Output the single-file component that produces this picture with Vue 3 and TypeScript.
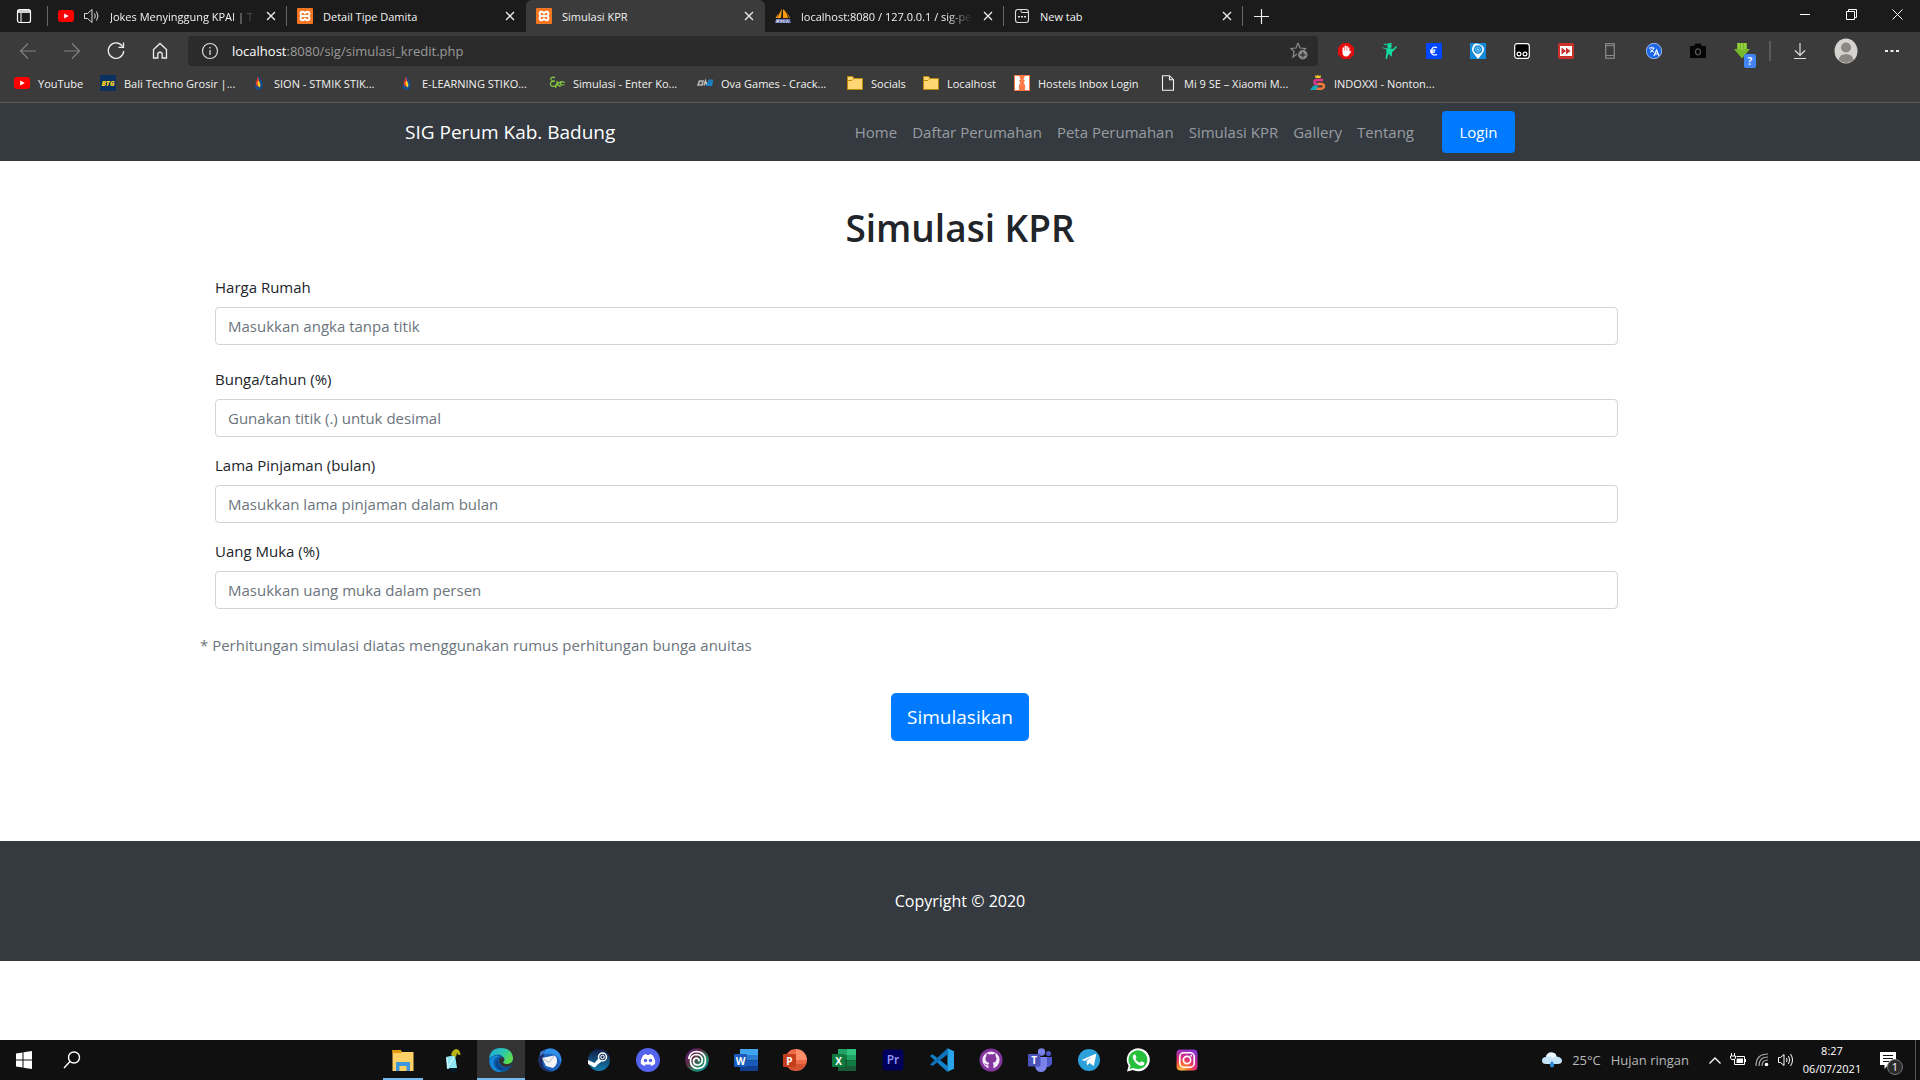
<script setup lang="ts">
import { ref } from 'vue'

interface Tab { title: string; icon: string; audio?: boolean; active?: boolean; fade?: boolean; divider?: boolean }
interface Bookmark { title: string; icon: string; width: number }
interface Field { id: string; label: string; placeholder: string; spaced?: boolean }
interface App { name: string; icon: string; state?: string }

const tabs: Tab[] = [
  { title: 'Jokes Menyinggung KPAI | T', icon: 'youtube', audio: true, fade: true, divider: true },
  { title: 'Detail Tipe Damita', icon: 'xampp' },
  { title: 'Simulasi KPR', icon: 'xampp', active: true },
  { title: 'localhost:8080 / 127.0.0.1 / sig-pe', icon: 'pma', fade: true, divider: true },
  { title: 'New tab', icon: 'newtab', divider: true },
]

const bookmarks: Bookmark[] = [
  { title: 'YouTube', icon: 'youtube', width: 86 },
  { title: 'Bali Techno Grosir |...', icon: 'btg', width: 150 },
  { title: 'SION - STMIK STIK...', icon: 'flame', width: 148 },
  { title: 'E-LEARNING STIKO...', icon: 'flame', width: 151 },
  { title: 'Simulasi - Enter Ko...', icon: 'ek', width: 148 },
  { title: 'Ova Games - Crack...', icon: 'ova', width: 150 },
  { title: 'Socials', icon: 'folder', width: 76 },
  { title: 'Localhost', icon: 'folder', width: 91 },
  { title: 'Hostels Inbox Login', icon: 'hostel', width: 146 },
  { title: 'Mi 9 SE – Xiaomi M...', icon: 'page', width: 150 },
  { title: 'INDOXXI - Nonton...', icon: 'indo', width: 150 },
]

const extensions = ['hand', 'runner', 'euro', 'pin', 'tamper', 'forward', 'phone', 'translate', 'camera', 'downloader']

const links = ['Home', 'Daftar Perumahan', 'Peta Perumahan', 'Simulasi KPR', 'Gallery', 'Tentang']

const fields: Field[] = [
  { id: 'harga', label: 'Harga Rumah', placeholder: 'Masukkan angka tanpa titik', spaced: true },
  { id: 'bunga', label: 'Bunga/tahun (%)', placeholder: 'Gunakan titik (.) untuk desimal' },
  { id: 'lama', label: 'Lama Pinjaman (bulan)', placeholder: 'Masukkan lama pinjaman dalam bulan' },
  { id: 'muka', label: 'Uang Muka (%)', placeholder: 'Masukkan uang muka dalam persen' },
]

const apps: App[] = [
  { name: 'File Explorer', icon: 'explorer', state: 'open' },
  { name: 'Notepad', icon: 'bird' },
  { name: 'Edge', icon: 'edge', state: 'current' },
  { name: 'Thunderbird', icon: 'thunderbird' },
  { name: 'Steam', icon: 'steam' },
  { name: 'Discord', icon: 'discord' },
  { name: 'Ubisoft Connect', icon: 'ubisoft' },
  { name: 'Word', icon: 'word' },
  { name: 'PowerPoint', icon: 'powerpoint' },
  { name: 'Excel', icon: 'excel' },
  { name: 'Premiere', icon: 'premiere' },
  { name: 'VS Code', icon: 'vscode' },
  { name: 'GitHub', icon: 'github' },
  { name: 'Teams', icon: 'teams' },
  { name: 'Telegram', icon: 'telegram' },
  { name: 'WhatsApp', icon: 'whatsapp' },
  { name: 'Instagram', icon: 'instagram' },
]

const values = ref<Record<string, string>>({ harga: '', bunga: '', lama: '', muka: '' })

// 16-unit glyphs for the browser chrome
const small: Record<string, string> = {
  youtube: '<rect y="2" width="16" height="12" rx="3" fill="#f00"/><path d="M6.2 5.4v5.2L10.8 8z" fill="#fff"/>',
  xampp: '<rect width="16" height="16" rx="1" fill="#f37623"/><path d="M8 5.500Q7 3.700 5.300 3.800 3.500 4 3.500 5.800 3.600 7.500 5 8 3.500 8.500 3.500 10.300 3.600 12.200 5.400 12.200 7 12.200 8 10.500 9 12.200 10.600 12.200 12.400 12.200 12.500 10.300 12.500 8.500 11 8 12.400 7.500 12.500 5.800 12.500 4 10.700 3.800 9 3.700 8 5.500zM5 8h6" fill="none" stroke="#fff" stroke-width="1.900" stroke-linejoin="round"/>',
  pma: '<path d="M7 .5 2 10h4zM8 1v9h5Q12 4 8 1zM3.500 5 .5 10H2zM12 4l3 6h-1z" fill="#f89c0e"/><path d="M1 11h14l1 4H0z" fill="#6c78af"/><path d="M2 15v-3h2v1.500H2M6 15v-3l1.500 1.500L9 12v3M11 15l1.500-3 1 3" fill="none" stroke="#d6dbee" stroke-width=".8"/>',
  newtab: '<rect x="1.500" y="1.500" width="13" height="13" rx="2.500" fill="none" stroke="#ddd" stroke-width="1.100"/><path d="M7 2v1.500q0 1 1 1h6.500" fill="none" stroke="#ddd"/><path d="M4 8h2v1.600H4zM7 8h2v1.600H7zM10 8h2v1.600h-2z" fill="#ddd"/>',
  btg: '<rect width="16" height="16" fill="#0a3161"/><text x="8" y="10.800" text-anchor="middle" font-size="7" font-weight="800" font-style="italic" fill="#f7d21c">BTG</text>',
  flame: '<path d="M8 1Q13 6 12.500 10.500T8 15Q4 14 5 10q2.500-4 3-9z" fill="#154d91"/><path d="M7.500 1.500q2.500 4 1.200 6.500t1 4q-4-.5-4-4.500Q7.500 5 7.500 1.500z" fill="#ef3b2d"/><path d="M8.300 5.500q3 3 1.600 7Q6.500 10 8.300 5.500z" fill="#ffd21c"/>',
  ek: '<path d="M6 2.500Q1 1.500 2 4.500q1 2 4 1.500Q1 6.500 1.500 9.500T7 10.500M8.500 6l-2 7M13 6.500q-3 .5-6 3.500 3-.5 4.500 2M16 7.500Q12 6 11.500 8.500t4 1" fill="none" stroke="#80c342" stroke-width="1.300"/>',
  ova: '<path d="M2.500 6h3.500l-1 4H1zM7 10.500 8.500 6l1.500 4" fill="none" stroke="#b9b9b9" stroke-width="1.600"/><path d="M16 5.500h-3.500l-2 4.500h3.500l1-2H13" fill="none" stroke="#1686cf" stroke-width="1.900"/>',
  folder: '<path d="M.5 1.500h5l1.500 2h8.500v11H.5z" fill="#ffd875" stroke="#c08a08"/><path d="M.5 5.500h4.500l2-2h8" fill="none" stroke="#c08a08"/>',
  hostel: '<rect width="16" height="16" fill="#ff7847"/><path d="M1 1h4l3 5-3 4v5H1zM15 1h-4L8 6l3 4v5h4z" fill="#fff"/><circle cx="8" cy="3.500" r="2" fill="#ff7847"/><path d="M5 5h6L9.500 8l2 5H10l-2-2-2 2H4.500l2-5z" fill="#ff7847"/>',
  page: '<path d="M2.500.7h7l4 4v10.600h-11zM9.500.7v4h4" fill="none" stroke="#f2f2f2" stroke-width="1.100"/>',
  indo: '<path d="M13 5H7Q4 5 4.500 7.500T7 9h3" fill="none" stroke="#e03a8c" stroke-width="2.400"/><path d="M8 9h3.500q2.700.5 2.500 2.500T11 13.700H5" fill="none" stroke="#f77c3a" stroke-width="2.400"/><path d="M0 15 3.500 10.500h5L6 15z" fill="#13a9b5"/><path d="m5 0 1.500 1L8 0l1.500 1L11 0l-.5 3h-5z" fill="#f5c529"/>',
  hand: '<path d="M4.700 0h6.600L16 4.700v6.600L11.300 16H4.700L0 11.300V4.700z" fill="#e40d0d"/><path d="M5.300 9V5M7.200 8V3.300M9 8V3.500M10.700 9V5" stroke="#fff" stroke-width="1.400" stroke-linecap="round"/><path d="M4.600 7.500h6.800v1.800l1-1.300q1-.2.800.8L11 12q-1 1.500-3 1.500-3.400-.2-3.400-4z" fill="#fff"/>',
  runner: '<circle cx="7.500" cy="3" r="2.300" fill="#11d9a0"/><path d="M1 1q3-.5 4 1.500M0 4q4 2 7 1l4 1 3-3 1 1-3.500 4-1.500 1v3l-1 2-2-3.500-1 2-1 3.500H3.500L4.500 9 4 6Q1 6 0 4z" fill="#11d9a0"/><path d="M2 1.500 10 .3" stroke="#11d9a0" stroke-width="1"/>',
  euro: '<rect width="16" height="16" rx="1" fill="#0047ff"/><path d="M11 4.600Q6 2.800 5.600 8T11 11.600M4 7.200h5.500M4 9h5" fill="none" stroke="#fff" stroke-width="1.300"/>',
  pin: '<rect width="16" height="16" fill="#128bdc"/><path d="M8 16 4.500 11.500Q1 8.500 2.500 4T8 .8 13.500 4Q15 8.500 11.500 11.500z" fill="#fff"/><circle cx="8" cy="6.500" r="4.300" fill="#128bdc"/><circle cx="8" cy="6.500" r="2.400" fill="none" stroke="#cbe8fb" stroke-dasharray="1.200 .7"/><circle cx="8" cy="6.500" r=".9" fill="#cbe8fb"/>',
  tamper: '<rect x=".7" y=".7" width="14.600" height="14.600" rx="2.500" fill="#000" stroke="#fff" stroke-width="1.200"/><circle cx="5" cy="11" r="1.900" fill="none" stroke="#fff" stroke-width="1.200"/><circle cx="11" cy="11" r="1.900" fill="none" stroke="#fff" stroke-width="1.200"/>',
  forward: '<rect width="16" height="16" rx="2" fill="#c9302c"/><rect x="2" y="3" width="12" height="10" fill="#fff"/><path d="M3.500 4.500 8 8l-4.500 3.500zM8 4.500 12.500 8 8 11.500z" fill="#c9302c"/>',
  phone: '<rect x="3.700" y=".7" width="8.600" height="14.600" fill="none" stroke="#8a8a8a" stroke-width="1.200"/><path d="M4 2.700h8M4 12.500h8" stroke="#8a8a8a"/>',
  translate: '<circle cx="8" cy="8" r="7.700" fill="#1b66e8" stroke="#cfe0fb" stroke-width=".7"/><path d="M3 5h5.500M5.700 3.700V5M4 9.300Q7 8 7.800 5M4.300 6.500Q6 8.500 8 9.200" fill="none" stroke="#fff"/><path d="m8 13 2.500-6 2.500 6M9 11h3" fill="none" stroke="#fff" stroke-width="1.200"/>',
  camera: '<path d="M0 3h4l1.500-2.500h5L12 3h4v12H0z" fill="#050505"/><ellipse cx="8" cy="8.800" rx="2.500" ry="3" fill="none" stroke="#555" stroke-width="1.300"/>',
  downloader: '<path d="M3 0h10v6h3l-8 9.500L0 6h3z" fill="#76b82a"/><path d="M5 0v6M8 0v7M11 0v6" stroke="#b5e05b"/>',
}

// 24-unit glyphs for the task bar
const large: Record<string, string> = {
  explorer: '<path d="M1.500 2h8l1.500 2h11.500v19h-21z" fill="#ffd065"/><path d="M1.500 2h8l1.500 3H1.500z" fill="#e39b0c"/><path d="M5 14h14v9h-3.500v-5h-7v5H5z" fill="#3e97dc"/>',
  bird: '<path d="m6 9 9-2 2 13-10 1z" fill="#8ee7f2"/><path d="m7 10 1 10M14 9l-6 10" stroke="#dffafd"/><path d="M11 7q1-5 5-6 4 0 4.500 6h-2l-1.500-2-1 4z" fill="#b7b414"/><path d="M9 20h7v4h-5z" fill="#061a2b"/>',
  edge: '<defs><linearGradient id="eg" x1="0" y1="0" x2="1" y2=".5"><stop stop-color="#1aa7dc"/><stop offset=".6" stop-color="#2dc8ad"/><stop offset="1" stop-color="#5bdc4b"/></linearGradient></defs><circle cx="12" cy="12" r="12" fill="#0c59a4"/><path d="M0 11Q1 0 12 0t12 10q0 6-6 6-4 0-4-2 2-1 1-4Q12 5 6 7q-5 2-6 4z" fill="url(#eg)"/><path d="M9 9q-6 2-4 8 2 5 8 7Q4 25 1 17-1 10 5 8q3-1 6 0z" fill="#1588d8"/><path d="M9 11q-2 6 4 9 4 2 9-1l-2 2Q8 24 7 16q0-3 2-5z" fill="#0d3f86"/><path d="M15 10q1 3-1 4 0 2 4 2 4 0 6-3l0 2q-2 4-7 4-7-1-7-6 0-3 3-4z" fill="#333"/>',
  thunderbird: '<circle cx="12" cy="12" r="11.500" fill="#1d63bd"/><path d="M7 2Q15-2 21 5q3 5 2 10-2-6-6-8T6 6z" fill="#2f8fe8"/><path d="M1 8Q-1 17 6 22q4 2 8 1-8-2-9-6T6 6Q3 6 1 8z" fill="#1c2a63"/><path d="m4 10 12-2.500q3 1 3 5 0 5-4 7.500L8 18z" fill="#f4f3f6"/><path d="m4 10 7 4.500L16 8" fill="none" stroke="#b3b6c9" stroke-width="1"/><path d="M2 4 6 2l1 3-5 3z" fill="#3c74c4"/>',
  steam: '<defs><linearGradient id="sg" x2="0" y2="1"><stop stop-color="#111d46"/><stop offset="1" stop-color="#147dac"/></linearGradient></defs><circle cx="12" cy="12" r="11" fill="url(#sg)"/><path d="m1 12 6.500 3 4-4.500 3 3L10 17Q8 21 5 18l-4-2z" fill="#fff"/><circle cx="15.500" cy="9" r="4" fill="#223b63" stroke="#fff" stroke-width="1.500"/><circle cx="15.500" cy="9" r="1.800" fill="none" stroke="#fff"/>',
  discord: '<circle cx="12" cy="12" r="12" fill="#5562ee"/><path d="m7.500 7 2.500-1 1 1h2l1-1 2.500 1Q20 12 19 16l-3.500 2-1-1.600h-5L8.500 18 5 16q-1-4 2.500-9z" fill="#fff"/><circle cx="9.500" cy="12.500" r="1.700" fill="#5562ee"/><circle cx="14.500" cy="12.500" r="1.700" fill="#5562ee"/>',
  ubisoft: '<defs><linearGradient id="ug" x2="1" y2="1"><stop stop-color="#4d2a9a"/><stop offset=".35" stop-color="#632545"/><stop offset=".65" stop-color="#28885e"/><stop offset="1" stop-color="#0a7bb7"/></linearGradient></defs><circle cx="12" cy="12" r="11.800" fill="url(#ug)"/><path d="M3.800 11Q4.500 4 11.500 3.500 20 4 20.500 12q0 8-8 8.500-6-.5-7-6.500-.5-7 6-7.500 5.500.3 5.800 5.500-.3 5-5 5-3.800-.3-3.800-4 .5-3.200 3.500-2.800 2.500.8 1.800 3" fill="none" stroke="#fff" stroke-width="1.700"/>',
  word: '<path d="M6 1h18v6H6z" fill="#41a5ee"/><path d="M6 7h18v5.500H6z" fill="#2b7cd3"/><path d="M6 12.500h18V18H6z" fill="#185abd"/><path d="M6 18h18v5H6z" fill="#103f91"/><rect y="6" width="13" height="13" rx="1" fill="#185abd"/><text x="6.500" y="16.500" text-anchor="middle" font-size="10" font-weight="700" fill="#fff">W</text>',
  powerpoint: '<path d="M13 1a11 11 0 1 0 11 11H13z" fill="#ed6c47"/><path d="M13 1v11h11A11 11 0 0 0 13 1z" fill="#ff8f6b"/><path d="M3 16a11 11 0 0 0 20 0z" fill="#d35230"/><rect y="6" width="13" height="13" rx="1" fill="#c43e1c"/><text x="6.500" y="16.500" text-anchor="middle" font-size="10" font-weight="700" fill="#fff">P</text>',
  excel: '<path d="M6 1h9v6H6z" fill="#21a366"/><path d="M15 1h9v6h-9z" fill="#33c481"/><path d="M6 7h9v5.500H6z" fill="#107c41"/><path d="M15 7h9v5.500h-9z" fill="#21a366"/><path d="M6 12.500h18V23H6z" fill="#185c37"/><path d="M15 12.500h9V18h-9z" fill="#107c41"/><rect y="6" width="13" height="13" rx="1" fill="#107c41"/><text x="6.500" y="16.500" text-anchor="middle" font-size="10" font-weight="700" fill="#fff">X</text>',
  premiere: '<rect x="1.500" y="1.500" width="21" height="21" rx="4" fill="#00005b"/><text x="12" y="16" text-anchor="middle" font-size="12" font-weight="600" fill="#9999ff">Pr</text>',
  vscode: '<path d="M0 8 2.500 6.300 17.500 18v6z" fill="#1083cd"/><path d="M0 16.500 2.500 18 17.500 6.500V.2z" fill="#0e70b8"/><path d="m17.500.2 6.500 3v17.600l-6.500 3z" fill="#29a5ec"/>',
  github: '<circle cx="12" cy="12" r="11.500" fill="#82359c"/><circle cx="12" cy="12" r="8.600" fill="#f5eaf8"/><path d="M9.500 21v-3.500q-3.500.3-4.300-2.300 1.600.3 2.300 1.300 1 .6 2 0 .2-1.200.8-1.700Q6 14 6.500 10L7.500 8V5.500q1.400 0 2.800 1 1.700-.4 3.400 0 1.400-1 2.800-1V8l1 2q.5 4-3.800 4.800.8.800.8 2.200v4z" fill="#82359c"/>',
  teams: '<circle cx="20.500" cy="5.500" r="2.500" fill="#5059c9"/><path d="M16 9h8v6q-1 4-5 4h-3z" fill="#5059c9"/><circle cx="13.500" cy="4" r="3.700" fill="#7b83eb"/><path d="M8 9h11v9q-1 6-6 6t-6-6z" fill="#7b83eb"/><rect y="6" width="12.500" height="12.500" rx="1" fill="#4b53bc"/><text x="6.250" y="16" text-anchor="middle" font-size="10" font-weight="700" fill="#fff">T</text>',
  telegram: '<circle cx="12" cy="12" r="11" fill="#2ba0da"/><path d="m4.500 12 13.500-6q1.500-.4 1.200 1l-2.400 11-4.200-3-2.500 2.500-.6-4.500L15 8.500 8 13z" fill="#fff"/>',
  whatsapp: '<path d="M1 23.500 2.600 18A11.500 11.500 0 1 1 7 22z" fill="#fff"/><path d="M3.500 21 4.600 17.600A9.400 9.400 0 1 1 7.500 20z" fill="#25c13d"/><path d="M8 6.500q-3 2 1 7.500 4.500 5 8.500 3.300 1.200-1.500.8-2.700l-3-1.400-1.500 1.600Q10.500 13.500 9.500 11l1-1.500-1.200-3z" fill="#fff"/>',
  instagram: '<defs><radialGradient id="ig" cx=".25" cy="1.050" r="1.100"><stop stop-color="#ffd34f"/><stop offset=".3" stop-color="#fd742d"/><stop offset=".6" stop-color="#e22c75"/><stop offset="1" stop-color="#8a34ce"/></radialGradient></defs><rect x="1.500" y="1.500" width="21" height="21" rx="4" fill="url(#ig)"/><rect x="4.800" y="4.800" width="14.400" height="14.400" rx="4" fill="none" stroke="#fff" stroke-width="1.600"/><circle cx="12" cy="12" r="3.600" fill="none" stroke="#fff" stroke-width="1.700"/><circle cx="16.200" cy="7.800" r="1" fill="#fff"/>',
}
</script>

<template>
  <div class="screen">
    <header class="browser">
      <div class="tabstrip">
        <button class="tab-actions" aria-label="Tab actions">
          <svg width="16" height="16" viewBox="0 0 16 16"><rect x="1.500" y="1.500" width="13" height="13" rx="2" fill="none" stroke="#fff" stroke-width="1.200" /><path d="M2 2h12v3H2z" fill="#fff" opacity=".8" /><path d="M5 5v9" stroke="#fff" /></svg>
        </button>
        <div v-for="tab in tabs" :key="tab.title" class="tab" :class="{ active: tab.active, divided: tab.divider }">
          <svg class="glyph" viewBox="0 0 16 16" v-html="small[tab.icon]"></svg>
          <svg v-if="tab.audio" class="glyph" viewBox="0 0 16 16" fill="none" stroke="#ddd"><path d="M.5 5.500h3L8 1.500v13l-4.500-4h-3zM10.500 5.500q1.500 2.500 0 5M12.500 3.500q3 4.500 0 9" /></svg>
          <span class="tab-title" :class="{ fade: tab.fade }">{{ tab.title }}</span>
          <button class="tab-close" aria-label="Close tab">
            <svg width="10" height="10" viewBox="0 0 10 10"><path d="m1 1 8 8m0-8-8 8" stroke="#eee" stroke-width="1.300" /></svg>
          </button>
        </div>
        <button class="new-tab" aria-label="New tab">
          <svg width="15" height="15" viewBox="0 0 15 15"><path d="M7.500 0v15M0 7.500h15" stroke="#eee" stroke-width="1.200" /></svg>
        </button>
        <div class="window-controls">
          <button aria-label="Minimize"><svg width="10" height="10" viewBox="0 0 10 10"><path d="M0 5.500h10" stroke="#fff" /></svg></button>
          <button aria-label="Restore"><svg width="11" height="11" viewBox="0 0 11 11" fill="none" stroke="#fff"><path d="M.5 2.500h8v8h-8zM2.500 2.500v-2h8v8h-2" /></svg></button>
          <button aria-label="Close"><svg width="11" height="11" viewBox="0 0 11 11"><path d="m.5.5 10 10m0-10-10 10" stroke="#fff" /></svg></button>
        </div>
      </div>

      <div class="toolbar">
        <div class="nav-buttons">
          <button aria-label="Back"><svg width="18" height="18" viewBox="0 0 18 18" fill="none" stroke="#808080" stroke-width="1.200"><path d="M17 9H1.500M9 1.500 1.500 9 9 16.500" /></svg></button>
          <button aria-label="Forward"><svg width="18" height="18" viewBox="0 0 18 18" fill="none" stroke="#808080" stroke-width="1.200"><path d="M1 9h15.500M9 1.500 16.500 9 9 16.500" /></svg></button>
          <button aria-label="Reload"><svg width="18" height="18" viewBox="0 0 18 18" fill="none" stroke="#eee" stroke-width="1.300"><path d="M15.500 4.500A7.700 7.700 0 1 0 16.700 9M16.500.5v4.800h-5" /></svg></button>
          <button aria-label="Home"><svg width="18" height="18" viewBox="0 0 18 18" fill="none" stroke="#eee" stroke-width="1.300"><path d="M2.500 16V7.500L9 1.500l6.500 6V16h-4.300v-4.500q-2.200-2.500-4.400 0V16z" /></svg></button>
        </div>
        <div class="address">
          <svg width="18" height="18" viewBox="0 0 18 18"><circle cx="9" cy="9" r="7.500" fill="none" stroke="#ddd" stroke-width="1.200" /><path d="M9 8v5M9 5v1.500" stroke="#ddd" stroke-width="1.300" /></svg>
          <span class="url"><b>localhost</b>:8080/sig/simulasi_kredit.php</span>
          <svg class="favorite" width="18" height="18" viewBox="0 0 18 18"><path d="m8 1 2 5 5.500.5-3 3M7 12l-4 3 1.200-5.500L.8 6.500 6 6l2-5" fill="none" stroke="#8a8a8a" stroke-width="1.200" /><circle cx="12.800" cy="12.800" r="4.700" fill="#8a8a8a" /><path d="M12.800 10v5.600M10 12.800h5.600" stroke="#2b2b2b" stroke-width="1.200" /></svg>
        </div>
        <div class="extensions">
          <button v-for="name in extensions" :key="name" :aria-label="name">
            <svg class="glyph" viewBox="0 0 16 16" v-html="small[name]"></svg>
            <span v-if="name === 'downloader'" class="ext-badge">?</span>
          </button>
        </div>
        <i class="bar"></i>
        <div class="tools">
          <button aria-label="Downloads"><svg width="14" height="18" viewBox="0 0 14 18" fill="none" stroke="#ddd" stroke-width="1.200"><path d="M7 1v12M2 8.500l5 5 5-5M1 16.500h12" /></svg></button>
          <button aria-label="Profile"><svg width="24" height="26" viewBox="0 0 24 26"><ellipse cx="12" cy="13" rx="11.500" ry="12.500" fill="#d5d3d0" /><circle cx="12" cy="9.500" r="5" fill="#8b8884" /><path d="M4.500 22q1-6 7.500-6t7.500 6q-7 6-15 0z" fill="#8b8884" /></svg></button>
          <button aria-label="Settings"><svg width="14" height="4" viewBox="0 0 14 4" fill="#eee"><path d="M0 1h3v2H0zM5.500 1h3v2h-3zM11 1h3v2h-3z" /></svg></button>
        </div>
      </div>

      <nav class="bookmarks" aria-label="Bookmarks">
        <a v-for="mark in bookmarks" :key="mark.title" href="#" :style="{ width: mark.width + 'px' }">
          <svg class="glyph" viewBox="0 0 16 16" v-html="small[mark.icon]"></svg>{{ mark.title }}
        </a>
      </nav>
    </header>

    <div class="page">
      <nav class="navbar">
        <div class="navbar-inner">
          <a class="brand" href="#">SIG Perum Kab. Badung</a>
          <div class="links">
            <a v-for="link in links" :key="link" href="#">{{ link }}</a>
            <button class="login">Login</button>
          </div>
        </div>
      </nav>

      <main>
        <h1>Simulasi KPR</h1>
        <form @submit.prevent>
          <div class="fields">
            <div v-for="field in fields" :key="field.id" class="field" :class="{ spaced: field.spaced }">
              <label :for="field.id">{{ field.label }}</label>
              <input :id="field.id" v-model="values[field.id]" type="text" :placeholder="field.placeholder" />
            </div>
          </div>
          <p class="note">* Perhitungan simulasi diatas menggunakan rumus perhitungan bunga anuitas</p>
          <button class="submit" type="submit">Simulasikan</button>
        </form>
      </main>

      <footer>Copyright © 2020</footer>
    </div>

    <div class="taskbar">
      <button class="task" aria-label="Start"><svg width="16" height="18" viewBox="0 0 16 18" fill="#fff"><path d="M0 2.500 6.500 1.500v7H0zM7.500 1.300 16 0v8.500H7.500zM0 9.500h6.500v7L0 15.500zM7.500 9.500H16V18l-8.500-1.300z" /></svg></button>
      <button class="task" aria-label="Search"><svg width="18" height="18" viewBox="0 0 18 18" fill="none" stroke="#fff" stroke-width="1.400"><circle cx="11" cy="6.500" r="5.500" /><path d="m7 10.500-6 6.500" /></svg></button>
      <div class="apps">
        <button v-for="app in apps" :key="app.name" class="task" :class="app.state" :aria-label="app.name">
          <svg width="24" height="24" viewBox="0 0 24 24" v-html="large[app.icon]"></svg>
        </button>
      </div>
      <div class="weather">
        <svg width="20" height="16" viewBox="0 0 20 16"><path d="M4 12Q0 12 0 8.500 0 5 4 5 5 0 10 .5q4 .5 4.500 4Q20 5 20 9q-.5 3-4 3z" fill="#c5e5fa" /><path d="M4 5Q5 0 10 .5q4 .5 4.500 4-3-.5-4 2Q8 3 4 5z" fill="#eef8ff" /><path d="M10 9q3 3 1.800 5.500-1.800 2-3.600 0Q7 12 10 9z" fill="#2b88dd" /></svg>
        <span>25°C</span><span>Hujan ringan</span>
      </div>
      <div class="tray">
        <svg width="12" height="7" viewBox="0 0 12 7" fill="none" stroke="#fff" stroke-width="1.300"><path d="m.5 6.500 5.500-5.500 5.500 5.500" /></svg>
        <svg width="16" height="14" viewBox="0 0 16 14" fill="none" stroke="#fff"><path d="M6.500 3.500h8v8h-10v-5M15.500 6v3M1.500 0v3M4.500 0v3M.5 3h5v2l-1 1.500h-3L.5 5z" /><path d="M7 5.500h6V10H6.500V7z" fill="#fff" stroke="none" /></svg>
        <svg width="14" height="14" viewBox="0 0 14 14" fill="none" stroke="#aaa"><path d="M1 13Q1 1 13 1M4 13q0-9 9-9M7 13q0-6 6-6" stroke-width="1.200" /><circle cx="11.500" cy="11.500" r="1.800" fill="#fff" stroke="none" /></svg>
        <svg width="16" height="14" viewBox="0 0 16 14" fill="none" stroke="#fff"><path d="M.5 4.500h2l3.500-3v11l-3.500-3h-2zM8.500 5q1.200 2 0 4M10.500 3q2.500 4 0 8M12.500 1q4 6 0 12" /></svg>
      </div>
      <div class="clock"><span>8:27</span><span>06/07/2021</span></div>
      <button class="notify" aria-label="Notifications">
        <svg width="16" height="17" viewBox="0 0 16 17"><path d="M0 0h16v13H8l-3.500 4v-4H0z" fill="#fff" /><path d="M3 3.500h10M3 6.500h10M3 9.500h6" stroke="#111" /></svg>
        <span class="count">1</span>
      </button>
      <i class="desktop-edge"></i>
    </div>
  </div>
</template>

<style>
body {
  margin: 0;
  background: #fff;
}
</style>

<style scoped>
.screen {
  display: flex;
  flex-direction: column;
  min-height: 100vh;
  font-family: "Open Sans", "Noto Sans", sans-serif;
  color: #212529;
}
.screen * { box-sizing: border-box; }
button {
  display: flex;
  align-items: center;
  justify-content: center;
  padding: 0;
  border: 0;
  background: none;
  color: inherit;
  font: inherit;
}
a { color: inherit; text-decoration: none; }
svg { flex: none; }
.glyph { width: 16px; height: 16px; }

.browser {
  background: #3b3b3b;
  border-bottom: 1px solid #5c5c5c;
  color: #f2f2f2;
  font-size: 11px;
}
.tabstrip {
  display: flex;
  height: 32px;
  background: #1b1b1b;
}
.tab-actions { width: 48px; }
.tab {
  position: relative;
  display: flex;
  align-items: center;
  gap: 10px;
  width: 239px;
  padding: 0 10px;
}
.tab.active { background: #3b3b3b; border-radius: 6px 6px 0 0; }
.tab.divided::after,
.tab:nth-child(2)::before {
  content: "";
  position: absolute;
  top: 6px;
  right: 0;
  width: 1px;
  height: 20px;
  background: #666;
}
.tab:nth-child(2)::before { right: auto; left: -1px; }
.tab-title { flex: 1; overflow: hidden; white-space: nowrap; }
.fade { -webkit-mask-image: linear-gradient(to right, #000 85%, transparent); mask-image: linear-gradient(to right, #000 85%, transparent); }
.tab-close { width: 12px; height: 16px; }
.new-tab { width: 36px; }
.window-controls { display: flex; margin-left: auto; }
.window-controls button { width: 46px; height: 28px; }

.toolbar { display: flex; align-items: center; height: 38px; }
.nav-buttons { display: flex; padding-left: 6px; width: 188px; }
.nav-buttons button { width: 44px; }
.address {
  display: flex;
  flex: 1;
  align-items: center;
  gap: 13px;
  height: 30px;
  padding: 0 10px 0 13px;
  background: #2b2b2b;
  border-radius: 4px;
  color: #9a9a9a;
  font-size: 13px;
}
.url b { color: #fff; font-weight: 400; }
.favorite { margin-left: auto; }
.extensions { display: flex; margin-left: 6px; }
.extensions button { position: relative; width: 44px; height: 30px; }
.ext-badge {
  position: absolute;
  right: 8px;
  bottom: -2px;
  width: 12px;
  height: 14px;
  border-radius: 2px;
  background: #4285f4;
  font-size: 10px;
  font-weight: 700;
  line-height: 14px;
}
.bar { width: 2px; height: 20px; margin: 0 6px 0 5px; background: #5a5a5a; }
.tools { display: flex; padding-right: 5px; }
.tools button { width: 46px; }

.bookmarks { display: flex; height: 32px; padding: 0 0 6px 14px; overflow: hidden; }
.bookmarks a {
  display: flex;
  flex: none;
  align-items: center;
  gap: 8px;
  white-space: nowrap;
}

.page { flex: 1; font-size: 15px; line-height: 24px; }
.navbar { background: #343a40; }
.navbar-inner {
  display: flex;
  align-items: center;
  justify-content: space-between;
  max-width: 1110px;
  height: 58px;
  margin: 0 auto;
}
.brand { color: #fff; font-size: 19px; }
.links { display: flex; align-items: center; gap: 15px; color: #999da0; }
.login {
  width: 73px;
  height: 42px;
  margin-left: 13px;
  border-radius: 4px;
  background: #007bff;
  color: #fff;
}
main { max-width: 1520px; margin: 0 auto; padding: 43px 0 100px; }
h1 { margin: 0 0 23px; font-size: 37px; font-weight: 600; line-height: 48px; text-align: center; }
.fields { padding: 0 102px 0 15px; }
.field { display: flex; flex-direction: column; gap: 8px; margin-bottom: 16px; }
.field.spaced { margin-bottom: 22px; }
input {
  height: 38px;
  padding: 0 12px;
  border: 1px solid #ced4da;
  border-radius: 4px;
  background: #fff;
  color: #495057;
  font: inherit;
}
input::placeholder { color: #6c757d; opacity: 1; }
.note { margin: 24px 0 36px; color: #6c757d; }
.submit {
  width: 138px;
  height: 48px;
  margin: 0 auto;
  border-radius: 5px;
  background: #007bff;
  color: #fff;
  font-size: 19px;
}
footer { padding: 48px 0; background: #343a40; color: #fff; font-size: 16px; text-align: center; }

.taskbar { display: flex; height: 40px; background: #101010; color: #fff; }
.task { width: 48px; height: 40px; }
.apps { display: flex; gap: 1px; margin-left: 283px; }
.current { background: #333; border-bottom: 2px solid #76b9ed; padding-top: 2px; }
.open { background: linear-gradient(#76b9ed, #76b9ed) center bottom / 40px 2px no-repeat; }
.weather {
  display: flex;
  align-items: center;
  gap: 10px;
  margin-left: auto;
  color: #b8b8b8;
  font-size: 13px;
  white-space: nowrap;
}
.tray { display: flex; align-items: center; gap: 9px; margin-left: 20px; }
.clock {
  display: flex;
  flex-direction: column;
  align-items: center;
  width: 76px;
  padding-top: 2px;
  font-size: 11px;
  line-height: 18px;
}
.notify { position: relative; width: 36px; margin-right: 9px; }
.count {
  position: absolute;
  top: 19px;
  left: 17px;
  width: 16px;
  height: 16px;
  border: 1px solid #777;
  border-radius: 50%;
  background: #2b2b2b;
  font-size: 11px;
  line-height: 14px;
}
.desktop-edge { width: 5px; border-left: 1px solid #555; }
</style>
